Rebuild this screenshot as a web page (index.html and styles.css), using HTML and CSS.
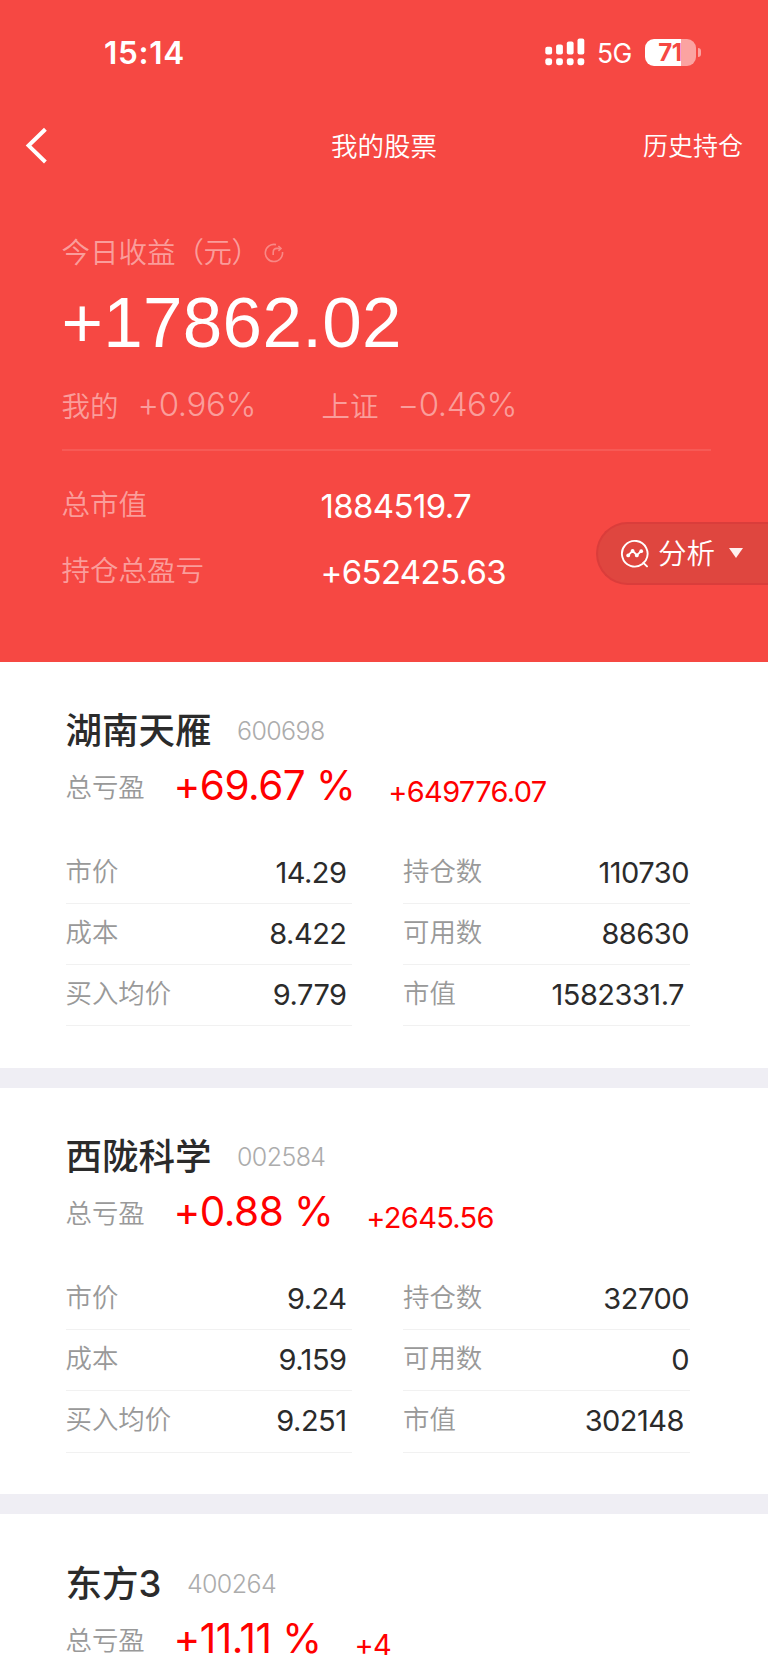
FILE: index.html
```html
<!DOCTYPE html>
<html lang="zh-CN">
<head>
    <meta charset="UTF-8">
    <meta name="viewport" content="width=device-width, initial-scale=1.0">
    <title>我的股票</title>
    <link rel="stylesheet" href="styles.css">
</head>
<body>
    <header class="hero">
        <div class="status-bar">
            <span class="time">15:14</span>
            <div class="status-right">
                <svg class="signal" width="40" height="28" viewBox="0 0 40 28" fill="#fff">
                    <rect x="0.3" y="8.8" width="6.8" height="7.6" rx="2"/>
                    <rect x="11.1" y="6.4" width="6.8" height="10" rx="2"/>
                    <rect x="21.8" y="3.4" width="6.8" height="13" rx="2"/>
                    <rect x="32.5" y="0.4" width="6.8" height="16" rx="2"/>
                    <rect x="0.3" y="20.2" width="6.8" height="7" rx="2.4"/>
                    <rect x="11.1" y="20.2" width="6.8" height="7" rx="2.4"/>
                    <rect x="21.8" y="20.2" width="6.8" height="7" rx="2.4"/>
                    <rect x="32.5" y="20.2" width="6.8" height="7" rx="2.4"/>
                </svg>
                <span class="network">5G</span>
                <div class="battery"><span class="battery-level">71</span></div>
                <span class="battery-cap"></span>
            </div>
        </div>

        <nav class="nav">
            <svg class="back" width="24" height="38" viewBox="0 0 24 38" fill="none" stroke="#fff" stroke-width="4">
                <path d="M20.4 2.2 L3.6 18.6 L20.4 35"/>
            </svg>
            <h1 class="nav-title">我的股票</h1>
            <a class="nav-link">历史持仓</a>
        </nav>

        <section class="summary">
            <div class="today">
                <span>今日收益<span class="unit">（元）</span></span>
                <svg class="refresh" width="20" height="20" viewBox="0 0 20 20" fill="none" stroke="#fff" stroke-width="1.6">
                    <path d="M12 1.6 A8.6 8.6 0 1 0 18.5 9"/>
                    <path d="M9.2 12 V9.4 Q9.2 5.4 13 5.4 H16.4"/>
                    <path d="M14.4 3 L17 5.4 L14.4 7.8"/>
                </svg>
            </div>
            <div class="today-value">+17862.02</div>
            <div class="compare">
                <div class="col"><span>我的</span><span class="rate">+0.96%</span></div>
                <div class="col"><span>上证</span><span class="rate">−0.46%</span></div>
            </div>
            <div class="total">
                <span class="total-label">总市值</span>
                <span class="total-value">1884519.7</span>
            </div>
            <div class="total">
                <span class="total-label">持仓总盈亏</span>
                <span class="total-value">+652425.63</span>
            </div>
        </section>

        <div class="analysis">
            <svg width="30" height="30" viewBox="0 0 30 30" fill="none" stroke="#fff" stroke-width="1.9" stroke-linecap="round">
                <path d="M22.4 25 A12.8 12.8 0 1 1 25.8 21.2 Q24.8 22.8 23.4 23.8 L27 27.4"/>
                <path d="M8.4 16.2 L12.6 11.8 L16.8 16.2 L21 12.4"/>
                <g fill="#fff" stroke="none">
                    <circle cx="8.2" cy="16.4" r="1.9"/>
                    <circle cx="12.6" cy="11.8" r="1.9"/>
                    <circle cx="16.8" cy="16.4" r="1.9"/>
                    <circle cx="21.2" cy="12.2" r="1.9"/>
                </g>
            </svg>
            <span class="analysis-text">分析</span>
            <span class="arrow"></span>
        </div>
    </header>

    <main>
        <section class="stock">
            <div class="stock-head">
                <h2 class="stock-name">湖南天雁</h2>
                <span class="stock-code">600698</span>
            </div>
            <div class="profit">
                <span class="profit-label">总亏盈</span>
                <span class="profit-rate">+69.67 %</span>
                <span class="profit-amount">+649776.07</span>
            </div>
            <div class="details">
                <div class="row"><span class="label">市价</span><span class="value">14.29</span></div>
                <div class="row"><span class="label">持仓数</span><span class="value">110730</span></div>
                <div class="row"><span class="label">成本</span><span class="value">8.422</span></div>
                <div class="row"><span class="label">可用数</span><span class="value">88630</span></div>
                <div class="row"><span class="label">买入均价</span><span class="value">9.779</span></div>
                <div class="row"><span class="label">市值</span><span class="value inset">1582331.7</span></div>
            </div>
        </section>

        <section class="stock">
            <div class="stock-head">
                <h2 class="stock-name">西陇科学</h2>
                <span class="stock-code">002584</span>
            </div>
            <div class="profit">
                <span class="profit-label">总亏盈</span>
                <span class="profit-rate">+0.88 %</span>
                <span class="profit-amount">+2645.56</span>
            </div>
            <div class="details">
                <div class="row"><span class="label">市价</span><span class="value">9.24</span></div>
                <div class="row"><span class="label">持仓数</span><span class="value">32700</span></div>
                <div class="row"><span class="label">成本</span><span class="value">9.159</span></div>
                <div class="row"><span class="label">可用数</span><span class="value">0</span></div>
                <div class="row"><span class="label">买入均价</span><span class="value">9.251</span></div>
                <div class="row"><span class="label">市值</span><span class="value inset">302148</span></div>
            </div>
        </section>

        <section class="stock last">
            <div class="stock-head">
                <h2 class="stock-name">东方3</h2>
                <span class="stock-code">400264</span>
            </div>
            <div class="profit">
                <span class="profit-label">总亏盈</span>
                <span class="profit-rate">+11.11 %</span>
                <span class="profit-amount">+4</span>
            </div>
        </section>
    </main>
</body>
</html>
```
FILE: styles.css
```css
* {
    margin: 0;
    padding: 0;
    box-sizing: border-box;
}

body {
    width: 768px;
    height: 1665px;
    overflow: hidden;
    background-color: #fff;
    font-family: Inter, "Noto Sans CJK SC", sans-serif;
    color: #2b2b2b;
    white-space: nowrap;
}

.hero {
    position: relative;
    height: 661.5px;
    background-color: #f64843;
    color: #fff;
}

/* status bar */
.status-bar {
    display: flex;
    justify-content: space-between;
    align-items: center;
    height: 104px;
    padding: 0 67px 0 104px;
}

.time {
    padding-top: 1px;
    font-size: 31.5px;
    font-weight: 600;
    line-height: 40px;
    letter-spacing: 0.7px;
}

.status-right {
    display: flex;
    align-items: center;
}

.network {
    width: 48px;
    margin-left: 12px;
    padding-top: 2px;
    font-size: 26.5px;
    letter-spacing: -0.7px;
}

.battery {
    width: 51px;
    height: 27px;
    border-radius: 9px;
    background: linear-gradient(to right, #fff 36px, #fba3a1 36px);
    text-align: center;
}

.battery-level {
    display: block;
    padding-right: 1px;
    font-size: 24px;
    font-weight: 700;
    line-height: 27px;
    letter-spacing: -0.5px;
    color: #f64843;
}

.battery-cap {
    width: 3px;
    height: 9px;
    margin-left: 2px;
    border-radius: 0 4px 4px 0;
    background-color: #fba3a1;
}

/* title bar */
.nav {
    display: grid;
    grid-template-columns: 1fr auto 1fr;
    align-items: center;
    height: 84px;
    padding: 0 25px;
}

.nav-title {
    font-size: 26.5px;
    font-weight: 350;
    line-height: 40px;
}

.nav-link {
    justify-self: end;
    font-size: 25px;
    font-weight: 350;
    line-height: 40px;
}

/* summary */
.summary {
    padding: 39px 57px 0 61.5px;
    font-weight: 350;
}

.today {
    display: flex;
    align-items: center;
    height: 46px;
    font-size: 28.5px;
    color: rgba(255, 255, 255, 0.48);
}

.unit {
    letter-spacing: -0.5px;
}

.refresh {
    margin-left: 4px;
    margin-top: 5px;
    opacity: 0.35;
}

.today-value {
    padding-top: 3px;
    font-family: "Liberation Sans", Arial, sans-serif;
    font-size: 71px;
    font-weight: 400;
    line-height: 94px;
    letter-spacing: 0.3px;
}

.compare {
    display: flex;
    height: 81px;
    padding-top: 10px;
    border-bottom: 2px solid rgba(255, 255, 255, 0.1);
    font-size: 28.5px;
    line-height: 53px;
    color: rgba(255, 255, 255, 0.48);
}

.compare .col {
    display: flex;
    width: 260px;
}

.rate {
    margin-left: 19px;
    font-size: 33px;
    line-height: 48px;
    letter-spacing: -0.4px;
}

.total {
    display: flex;
    height: 65.5px;
}

.compare + .total {
    margin-top: 22px;
}

.total-label {
    width: 259px;
    font-size: 28.5px;
    line-height: 63px;
    color: rgba(255, 255, 255, 0.48);
}

.total-value {
    font-size: 33px;
    font-weight: 400;
    line-height: 67px;
    letter-spacing: -0.65px;
}

/* floats over the right edge of the header */
.analysis {
    position: absolute;
    right: 0;
    top: 522px;
    display: flex;
    align-items: center;
    width: 172px;
    height: 63px;
    padding-left: 22px;
    border: 2px solid #da3d3b;
    border-right: none;
    border-radius: 32px 0 0 32px;
    background-color: #df463f;
}

.analysis-text {
    margin-left: 8px;
    margin-bottom: 4px;
    font-size: 28.5px;
    font-weight: 350;
}

.arrow {
    margin-left: 14px;
    margin-bottom: 2px;
    border-top: 10px solid #fff0ef;
    border-left: 7px solid transparent;
    border-right: 7px solid transparent;
}

/* stock cards */
.stock {
    height: 426.4px;
    padding: 44.5px 78.5px 0 65.5px;
    border-bottom: 20.5px solid #efeef4;
}

.stock.last {
    height: 150px;
    border-bottom: none;
}

.stock-head {
    display: flex;
    height: 48px;
    line-height: 50px;
}

.stock-name {
    font-size: 36.5px;
    font-weight: 500;
}

.stock-code {
    margin-left: 25.5px;
    font-size: 25px;
    font-weight: 300;
    line-height: 50px;
    letter-spacing: -0.6px;
    color: #acacac;
}

.profit {
    display: flex;
    align-items: flex-start;
    height: 88.5px;
}

.profit-label {
    width: 108px;
    font-size: 26.4px;
    font-weight: 350;
    line-height: 67px;
    color: #999;
}

.profit-rate {
    font-size: 40.5px;
    line-height: 63px;
    letter-spacing: -0.5px;
    color: #f00;
}

.profit-amount {
    margin-left: 33px;
    font-size: 29px;
    line-height: 75px;
    letter-spacing: -0.7px;
    color: #f00;
}

.details {
    display: grid;
    grid-template-columns: 286.5px 286.5px;
    column-gap: 51px;
}

.row {
    display: flex;
    justify-content: space-between;
    height: 61.3px;
    border-bottom: 1px solid #f1f1f1;
}

.label {
    font-size: 26.4px;
    font-weight: 350;
    line-height: 57px;
    color: #999;
}

.value {
    padding-right: 5.5px;
    font-size: 29px;
    line-height: 59px;
    letter-spacing: -0.5px;
}

.row:nth-child(even) .value {
    padding-right: 0.5px;
}

.row:nth-child(even) .value.inset {
    padding-right: 5.5px;
}
```
